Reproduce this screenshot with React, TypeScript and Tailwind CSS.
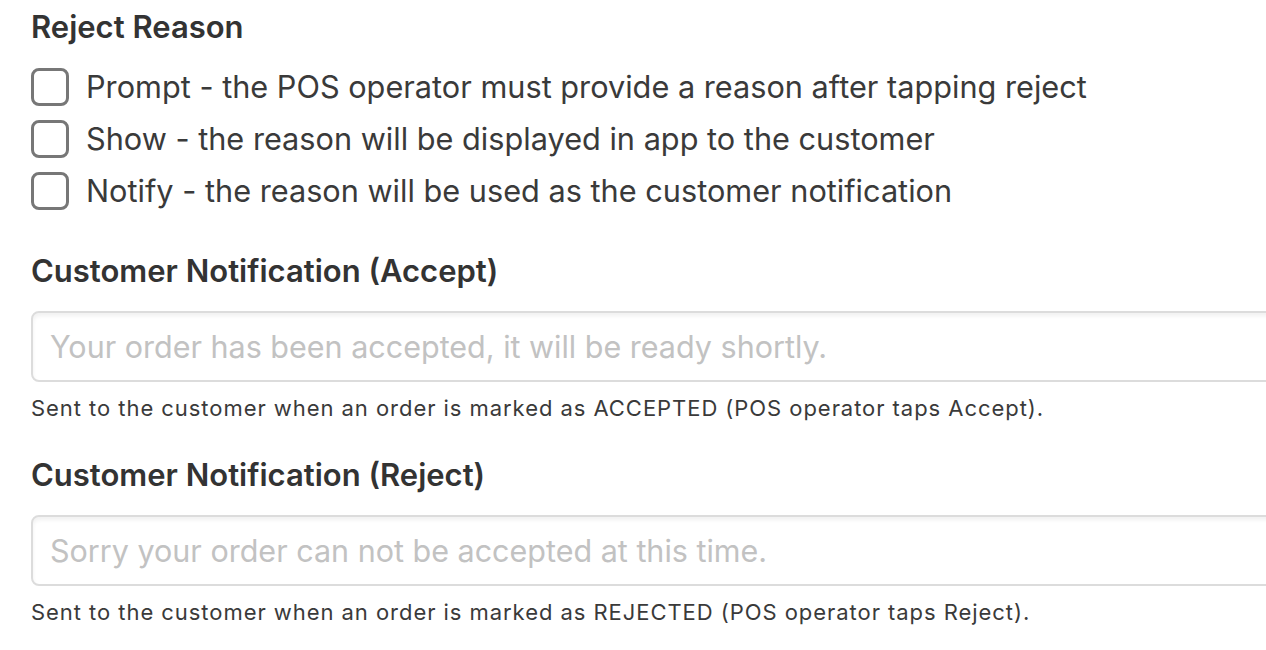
const reasons = [
  'Prompt - the POS operator must provide a reason after tapping reject',
  'Show - the reason will be displayed in app to the customer',
  'Notify - the reason will be used as the customer notification',
]

const Field = ({
  title,
  placeholder,
  help,
}: {
  title: string
  placeholder: string
  help: string
}) => (
  <div className="flex flex-col">
    <h2 className="h-[44px] text-[31px] leading-[44px] font-semibold text-[#333]">{title}</h2>
    <input
      className="mt-[18px] h-[71px] w-[1260px] rounded-[8px] border-2 border-[#dcdcdc] bg-white px-[17px] text-[30.5px] text-[#333] shadow-[inset_0_3px_4px_rgba(0,0,0,0.06)] outline-none placeholder:text-[#c2c2c2]"
      placeholder={placeholder}
    />
    <p className="mt-[11px] text-[22px] leading-[30px] tracking-[0.95px] text-[#3a3a3a]">{help}</p>
  </div>
)

export default function App() {
  return (
    <div className="min-h-screen overflow-hidden bg-white pl-[31px] font-['Inter','Noto_Sans',sans-serif]">
      <h2 className="pt-[5px] text-[31px] leading-[44px] font-semibold text-[#333]">Reject Reason</h2>
      <ul className="mt-[19px] flex flex-col gap-[14px]">
        {reasons.map((r) => (
          <li key={r} className="flex h-[38px] items-center gap-[17px]">
            <span className="h-[38px] w-[38px] shrink-0 rounded-[8px] border-[3px] border-[#777]" />
            <span className="text-[30.7px] text-[#3a3a3a]">{r}</span>
          </li>
        ))}
      </ul>
      <div className="mt-[39px] flex flex-col gap-[30px]">
        <Field
          title="Customer Notification (Accept)"
          placeholder="Your order has been accepted, it will be ready shortly."
          help="Sent to the customer when an order is marked as ACCEPTED (POS operator taps Accept)."
        />
        <Field
          title="Customer Notification (Reject)"
          placeholder="Sorry your order can not be accepted at this time."
          help="Sent to the customer when an order is marked as REJECTED (POS operator taps Reject)."
        />
      </div>
    </div>
  )
}
